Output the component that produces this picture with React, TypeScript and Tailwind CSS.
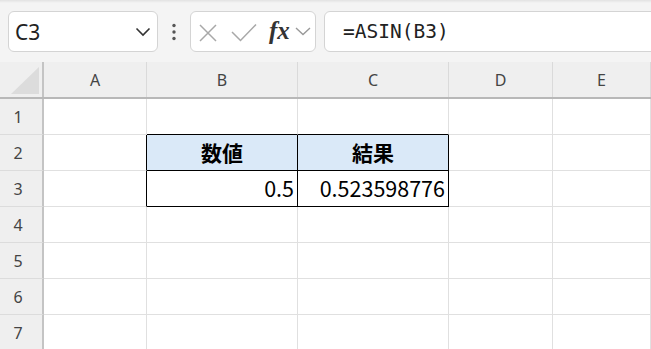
import React from 'react';

const cols = ['A', 'B', 'C', 'D', 'E'];
const colW = ['w-[103px]', 'w-[151px]', 'w-[151px]', 'w-[104px]', 'flex-1'];

type Cell = { text?: string; head?: boolean; right?: boolean; br?: boolean; bb?: boolean };

const cells: Record<string, Cell> = {
    A2: { br: true },
    A3: { br: true },
    B1: { bb: true },
    C1: { bb: true },
    B2: { text: '数値', head: true, br: true, bb: true },
    C2: { text: '結果', head: true, br: true, bb: true },
    B3: { text: '0.5', right: true, br: true, bb: true },
    C3: { text: '0.523598776', right: true, br: true, bb: true },
};

const Toolbar: React.FC = () => (
    <div className="h-[62px] bg-[#f4f4f4] flex flex-col">
        <div className="h-[3px] bg-gradient-to-b from-[#e2e2e2] to-[#f4f4f4]" />
        <div className="flex items-start pl-2 mt-[8px]">
            <div className="w-[150px] h-[41px] bg-white border border-[#d4d4d4] rounded-md flex items-center justify-between pl-[6px] pr-[6px]">
                <span className="text-[21px] text-[#222] font-['Noto_Sans',sans-serif] leading-none mt-[2px]">C3</span>
                <svg width="16" height="10" viewBox="0 0 16 10">
                    <polyline points="1.5,1.5 8,8 14.5,1.5" fill="none" stroke="#333" strokeWidth="1.6" />
                </svg>
            </div>
            <div className="w-[32px] h-[41px] flex items-center justify-center">
                <svg width="6" height="18" viewBox="0 0 6 18">
                    <circle cx="3" cy="2.5" r="1.7" fill="#555" />
                    <circle cx="3" cy="9" r="1.7" fill="#555" />
                    <circle cx="3" cy="15.5" r="1.7" fill="#555" />
                </svg>
            </div>
            <div className="w-[126px] h-[41px] bg-white border border-[#d4d4d4] rounded-md flex items-center pl-[7px]">
                <svg width="20" height="18" viewBox="0 0 20 18" className="mt-[2px]">
                    <path d="M2 1 L18 17 M18 1 L2 17" stroke="#a8a8a8" strokeWidth="1.5" fill="none" />
                </svg>
                <svg width="26" height="19" viewBox="0 0 26 19" className="ml-[13px] mt-[2px]">
                    <polyline points="1,9 9.5,17.5 25,1.5" fill="none" stroke="#a8a8a8" strokeWidth="1.5" />
                </svg>
                <span className="ml-[12px] text-[25px] italic font-bold text-[#333] font-['Liberation_Serif',serif] leading-none -mt-[3px]">fx</span>
                <svg width="16" height="9" viewBox="0 0 16 9" className="ml-[5px]">
                    <polyline points="1,1 8,7.5 15,1" fill="none" stroke="#999" strokeWidth="1.4" />
                </svg>
            </div>
            <div className="flex-1 -mr-4 ml-2 h-[41px] bg-white border border-[#d4d4d4] rounded-md flex items-center pl-[18px]">
                <span className="text-[19.5px] text-[#222] font-['DejaVu_Sans_Mono',monospace] leading-none">=ASIN(B3)</span>
            </div>
        </div>
    </div>
);

const HeaderRow: React.FC = () => (
    <div className="flex h-[37px] bg-[#efefef] border-b-2 border-[#b8b8b8]">
        <div className="w-[44px] shrink-0 border-r-2 border-[#c4c4c4] flex items-end justify-end pr-[3px] pb-[3px]">
            <svg width="28" height="27" viewBox="0 0 28 27">
                <polygon points="28,0 28,27 0,27" fill="#dcdcdc" />
            </svg>
        </div>
        {cols.map((c, i) => (
            <div
                key={c}
                className={`${colW[i]} shrink-0 border-r border-[#dadada] flex items-center justify-center text-[16px] text-[#444] font-['Noto_Sans',sans-serif]`}
            >
                {c}
            </div>
        ))}
    </div>
);

const Row: React.FC<{ n: number }> = ({ n }) => (
    <div className="flex h-[36px]">
        <div className="w-[44px] shrink-0 bg-[#efefef] border-r-2 border-b border-[#c4c4c4] border-b-[#dcdcdc] flex items-center justify-center pr-[6px] text-[16px] text-[#444] font-['Noto_Sans',sans-serif]">
            {n}
        </div>
        {cols.map((c, i) => {
            const cell = cells[`${c}${n}`] || {};
            return (
                <div
                    key={c}
                    className={`${colW[i]} shrink-0 border-r border-b flex items-center font-['Noto_Sans_CJK_JP',sans-serif] text-black
                        ${cell.br ? 'border-r-black' : 'border-r-[#e0e0e0]'}
                        ${cell.bb ? 'border-b-black' : 'border-b-[#e0e0e0]'}
                        ${cell.head ? 'bg-[#dae9f8] justify-center font-bold text-[21px]' : 'bg-white'}
                        ${cell.right ? 'justify-end pr-[3px] text-[21.5px]' : ''}`}
                >
                    {cell.text}
                </div>
            );
        })}
    </div>
);

export default function App() {
    return (
        <div className="w-[651px] h-[349px] overflow-hidden bg-white">
            <Toolbar />
            <HeaderRow />
            {[1, 2, 3, 4, 5, 6, 7].map((n) => (
                <Row key={n} n={n} />
            ))}
        </div>
    );
}
